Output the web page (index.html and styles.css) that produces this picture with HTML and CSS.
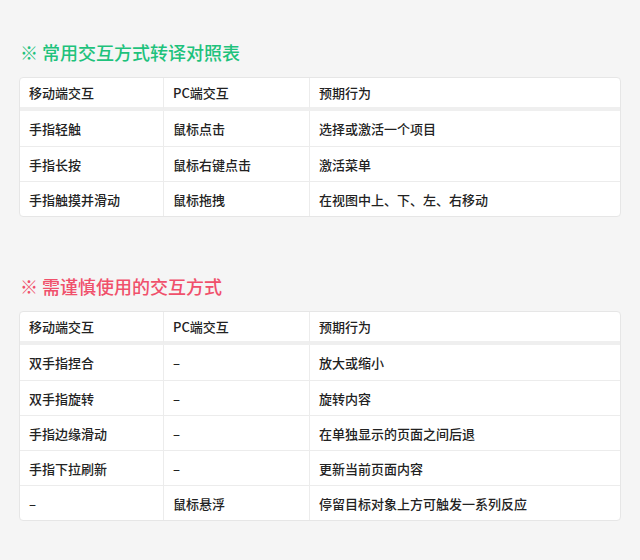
FILE: index.html
```html
<!DOCTYPE html>
<html lang="zh-CN">
<head>
<meta charset="utf-8">
<link rel="stylesheet" href="styles.css">
</head>
<body>
<div class="page">
  <section class="section">
    <h2 class="title title-green">※ 常用交互方式转译对照表</h2>
    <div class="card">
      <table class="grid">
        <colgroup><col class="c1"><col class="c2"><col></colgroup>
        <thead><tr><th>移动端交互</th><th>PC端交互</th><th>预期行为</th></tr></thead>
        <tbody>
          <tr><td>手指轻触</td><td>鼠标点击</td><td>选择或激活一个项目</td></tr>
          <tr><td>手指长按</td><td>鼠标右键点击</td><td>激活菜单</td></tr>
          <tr><td>手指触摸并滑动</td><td>鼠标拖拽</td><td>在视图中上、下、左、右移动</td></tr>
        </tbody>
      </table>
    </div>
  </section>
  <section class="section second">
    <h2 class="title title-red">※ 需谨慎使用的交互方式</h2>
    <div class="card">
      <table class="grid">
        <colgroup><col class="c1"><col class="c2"><col></colgroup>
        <thead><tr><th>移动端交互</th><th>PC端交互</th><th>预期行为</th></tr></thead>
        <tbody>
          <tr><td>双手指捏合</td><td>–</td><td>放大或缩小</td></tr>
          <tr><td>双手指旋转</td><td>–</td><td>旋转内容</td></tr>
          <tr><td>手指边缘滑动</td><td>–</td><td>在单独显示的页面之间后退</td></tr>
          <tr><td>手指下拉刷新</td><td>–</td><td>更新当前页面内容</td></tr>
          <tr><td>–</td><td>鼠标悬浮</td><td>停留目标对象上方可触发一系列反应</td></tr>
        </tbody>
      </table>
    </div>
  </section>
</div>
</body>
</html>
```
FILE: styles.css
```css
html, body {
  margin: 0;
  padding: 0;
  background: #f5f5f5;
}
body {
  font-family: "Noto Sans CJK SC", "Noto Sans", sans-serif;
  color: #222;
  width: 640px;
  height: 560px;
  overflow: hidden;
}
.page {
  padding: 40px 19px 0 19px;
}
.section.second {
  margin-top: 57px;
}
.title {
  margin: 0 0 13px 1px;
  font-size: 18px;
  line-height: 24px;
  font-weight: 500;
}
.title-green { color: #1ec27c; }
.title-red { color: #f0506b; }
.card {
  width: 600px;
  background: #fff;
  border: 1px solid #e6e6e6;
  border-radius: 4px;
  overflow: hidden;
}
.grid {
  width: 100%;
  border-collapse: separate;
  border-spacing: 0;
  table-layout: fixed;
  font-size: 13px;
}
.c1 { width: 143px; }
.c2 { width: 146px; }
.grid th, .grid td {
  text-align: left;
  font-weight: 500;
  padding: 0 0 0 9px;
  white-space: nowrap;
}
.grid th {
  height: 29px;
  border-bottom: 4px solid #efefef;
}
.grid td {
  height: 34px;
  border-top: 1px solid #ececec;
}
.grid tbody tr:first-child td {
  border-top: 0;
  height: 35px;
}
.grid th + th, .grid td + td {
  border-left: 1px solid #ececec;
}
```
